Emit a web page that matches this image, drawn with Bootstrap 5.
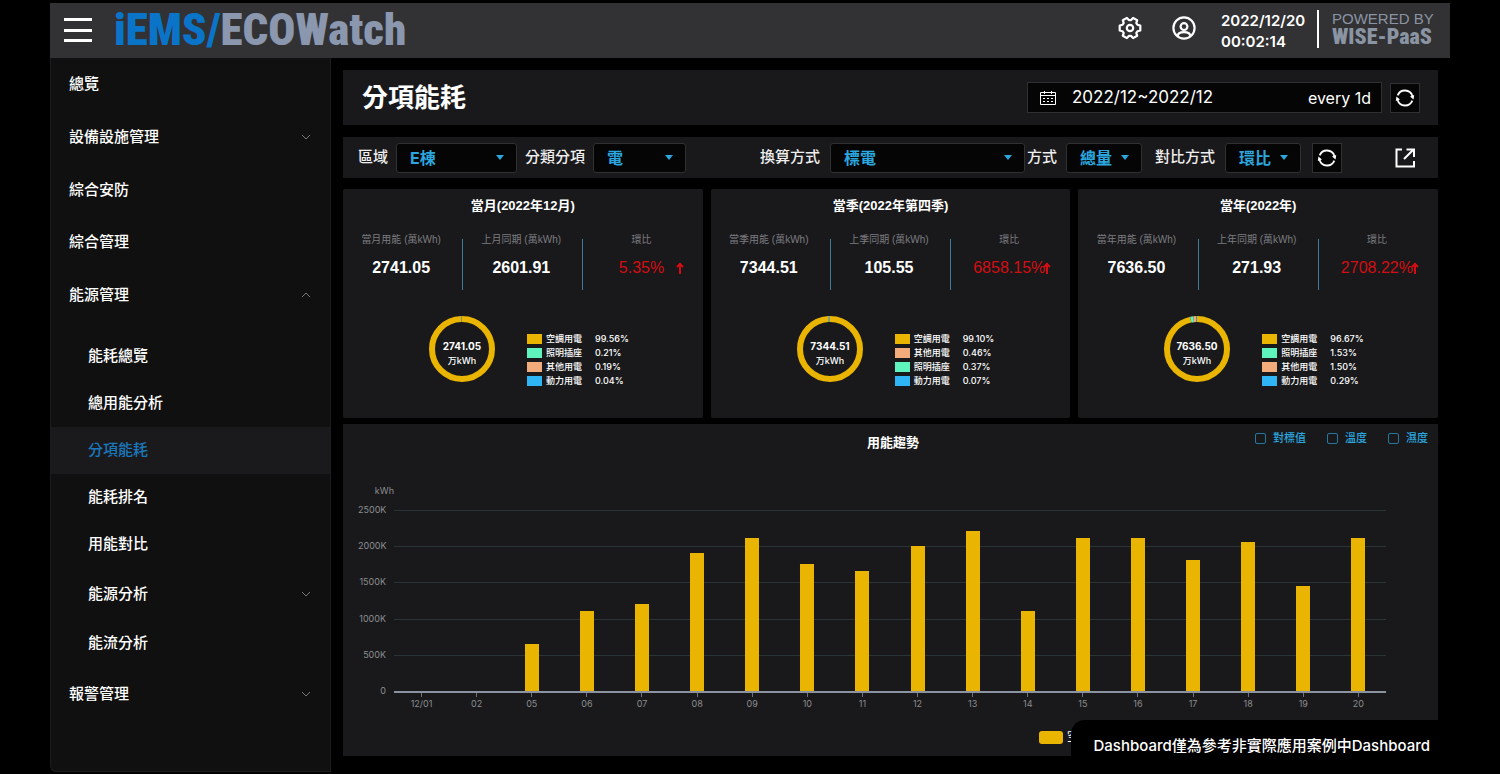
<!DOCTYPE html>
<html lang="zh-Hant">
<head>
<meta charset="utf-8">
<meta name="viewport" content="width=device-width, initial-scale=1">
<title>iEMS/ECOWatch</title>
<link href="https://cdn.jsdelivr.net/npm/bootstrap@5.3.0/dist/css/bootstrap.min.css" rel="stylesheet">
<style>
  :root { --panel:#19191b; --cyan:#2ba6df; --amber:#eab500; --mint:#5df5bd; --peach:#f2ab7b; --sky:#2fb4f5; }
  body { background:#000; color:#fff; font-family:Inter,"Noto Sans CJK TC",sans-serif; font-size:15px; }
  a { color:inherit; text-decoration:none; }
  .app { min-height:100vh; padding:3px 50px 2px; }
  .topbar { background:#323234; height:55px; }
  .burger { width:56px; height:55px; background:#1a1a1c; border:1px solid #232325; }
  .narrow { font-family:"Roboto Condensed",Roboto,"Liberation Sans",sans-serif; font-weight:900; }
  .brand { font-size:45px; line-height:52px; color:#8a97ae; padding-bottom:1px; }
  .brand span { color:#0a74c9; }
  .plain-btn { background:none; border:0; padding:0; color:#fff; line-height:0; }
  .top-icon { padding-bottom:6px; }
  .clock { line-height:21px; font-weight:600; width:96px; }
  .powered { border-left:2px solid #fff; height:38px; width:133px; color:#8a94a3; font-family:"Liberation Sans",sans-serif; line-height:17px; padding-left:13px; margin-bottom:4px; }
  .powered .narrow { font-size:22px; line-height:20px; }
  .sidebar { width:281px; background:#101010; border:1px solid #1c1c1e; border-top:0; border-bottom-left-radius:6px; }
  .side-item { height:52px; padding:0 19px 0 18px; width:100%; background:none; border:0; color:#fff; text-align:left; font-weight:500; }
  .side-item.tall { height:54px; }
  .side-sub { padding-top:11px; }
  .side-sub .side-item { height:47px; padding-left:37px; }
  .side-sub .side-item.tall { height:52px; }
  .side-sub .side-item.current { background:#1a1a1c; color:#1a78bd; }
  main { padding:12px 12px 0; min-width:0; }
  .panel { background:var(--panel); }
  .titlebar { height:55px; padding:0 18px 0 19px; }
  .titlebar h1 { font-size:26px; font-weight:700; }
  .boxed { background:#050505; border:1px solid #303032; color:#fff; }
  .range { width:355px; height:31px; padding:0 10px 0 12px; font-size:17px; }
  .range .step { font-size:16px; }
  .sq { width:30px; height:30px; padding:0; line-height:0; }
  .filters { height:41px; padding:0 23px 0 15px; margin-top:12px; }
  .filters label { font-weight:500; color:#eee; }
  .lab { margin-right:10px; }
  .lab-near { margin:0 9px 0 2px; }
  .lab-far { margin:0 10px 0 13px; }
  .filters .last { margin-left:11px; }
  .pick { height:30px; border-radius:3px; padding:0 12px 0 13px; color:var(--cyan); font-size:16px; font-weight:700; appearance:none;
    background:#050505 url("data:image/svg+xml,%3Csvg xmlns='http://www.w3.org/2000/svg' width='8' height='5'%3E%3Cpath d='M0 0h8L4 5z' fill='%232ba6df'/%3E%3C/svg%3E") no-repeat right 12px center; }
  .w-a { width:121px; } .w-b { width:93px; } .w-c { width:195px; } .w-d { width:76px; }
  .grow-l { flex:7; } .grow-r { flex:5; }
  .stats { margin:11px 0 6px; }
  .stat { height:229px; flex:1 1 0; border-radius:2px; }
  .cap { font-size:13px; line-height:18px; font-weight:700; font-family:"Liberation Sans","Noto Sans CJK TC",sans-serif; }
  .trio { padding-top:24px; font-family:"Liberation Sans","Noto Sans CJK TC",sans-serif; }
  .trio > div { flex:1 1 0; height:51px; padding-right:3px; }
  .trio > div + div { border-left:1px solid #3b7d99; }
  .trio .tag { font-size:10px; line-height:12px; margin-top:-5px; color:#7c7c80; white-space:nowrap; }
  .trio .num { font-size:16px; line-height:20px; margin-top:12px; font-weight:700; }
  .trio .rise { display:grid; color:#d40d12; font-weight:400; }
  .rise > * { grid-area:1/1; justify-self:center; }
  .rise > svg { justify-self:end; align-self:center; margin-right:16px; }
  .share { padding-top:24px; }
  .share .ring { width:68px; height:68px; margin:1px 0 0 85px; }
  .keys { margin:18px 0 0 31px; font-size:9px; line-height:14px; font-weight:500; }
  .keys i { width:15px; height:10px; }
  .keys .who { width:49px; }
  .trend { height:332px; padding:6px 10px 0 15px; }
  .trend .side { flex:1 1 0; }
  .opts { gap:21px; padding-top:1px; }
  .opts label { font-size:11px; line-height:14px; color:var(--cyan); font-weight:500; padding-left:7px; }
  .opts input { appearance:none; width:11px; height:11px; border:1px solid #24789f; border-radius:2px; margin:0; }
  .plot { margin:32px 42px 0 0; display:grid; grid-template-columns:28px 1fr; column-gap:8px; font-size:9px; color:#8b8d90; }
  .unit { line-height:14px; text-align:right; grid-column:1; margin-right:-8px; white-space:nowrap; }
  .yaxis { grid-column:1; grid-row:2; margin:6px 0 -6px; line-height:12px; height:193px; text-align:right; }
  .grid-lines, .bars { grid-column:2; grid-row:2; height:181px; margin-top:12px; }
  .grid-lines div { flex:1; border-top:1px solid #2a3336; }
  .bars { border-bottom:2px solid #8b93a0; height:183px; }
  .bars div { flex:1; }
  .bars i { display:block; width:14px; margin:0 auto; background:var(--amber); }
  .xaxis { grid-column:2; grid-row:3; }
  .xaxis div { flex:1; text-align:center; line-height:14px; }
  .xaxis div::before { content:""; display:block; width:1px; height:4px; background:#6c7280; margin:0 auto; }
  .series { width:389px; margin-top:18px; font-size:12px; line-height:16px; }
  .series i { width:24px; height:13px; border-radius:3px; background:var(--amber); }
  .note { position:fixed; right:0; bottom:0; height:54px; padding:0 70px 0 23px; background:#000; border-top-left-radius:14px; font-weight:500; line-height:52px; }
</style>
</head>
<body>
<svg width="0" height="0" class="d-none">
  <symbol id="down" viewBox="0 0 10 6"><path d="M1 1l4 4 4-4" fill="none" stroke="#77777b"/></symbol>
  <symbol id="up" viewBox="0 0 10 6"><path d="M1 5l4-4 4 4" fill="none" stroke="#77777b"/></symbol>
  <symbol id="sync" viewBox="-10 -10 20 20">
    <path d="M-7.3-2.6A7.8 7.8 0 0 1 7.4-2M7.3 2.6A7.8 7.8 0 0 1-7.4 2" fill="none" stroke="#fff" stroke-width="1.8"/>
    <path d="M5-1.6L9.2-3 8.6 1.6zM-5 1.6L-9.2 3-8.6-1.6z" fill="#fff"/>
  </symbol>
</svg>
<div class="app d-flex flex-column">
  <header class="topbar d-flex align-items-center">
    <button class="burger plain-btn flex-shrink-0" aria-label="選單">
      <svg width="28" height="26" fill="#fff"><path d="M0 0h28v3H0zM0 11h28v3H0zM0 21h28v3H0z"/></svg>
    </button>
    <a href="#" class="brand narrow ms-2"><span>iEMS/</span>ECOWatch</a>
    <div class="d-flex align-items-center ms-auto">
      <button class="plain-btn top-icon" aria-label="設定">
        <svg width="26" height="26" viewBox="-13 -13 26 26" fill="none" stroke="#fff" stroke-width="2.2" stroke-linejoin="round"><path d="M10.3-2.4V2.4L7.6 3.2 6.3 4.9 7.2 7.8 3.1 10.1 1.1 7.9H-1.1L-3.1 10.1-7.2 7.8-6.3 4.9-7.6 3.2-10.3 2.4V-2.4L-7.6-3.2-6.3-4.9-7.2-7.8-3.1-10.1-1.1-7.9H1.1L3.1-10.1 7.2-7.8 6.3-4.9 7.6-3.2z"/><circle r="3.2"/></svg>
      </button>
      <button class="plain-btn top-icon ms-4 ps-1" aria-label="使用者">
        <svg width="26" height="26" viewBox="-13 -13 26 26" fill="none" stroke="#fff" stroke-width="2.2"><circle r="10.6"/><circle cy="-1.4" r="3.4"/><path d="M-6.6 8.4C-6 2.6 6 2.6 6.6 8.4"/></svg>
      </button>
      <div class="clock text-nowrap ms-4">2022/12/20<br>00:02:14</div>
      <div class="powered text-nowrap"><div>POWERED BY</div><div class="narrow">WISE-PaaS</div></div>
    </div>
  </header>
  <div class="d-flex flex-fill">
    <nav class="sidebar flex-shrink-0">
      <a href="#" class="side-item d-flex align-items-center">總覽</a>
      <button class="side-item tall d-flex align-items-center justify-content-between">設備設施管理<svg width="10" height="6"><use href="#down"/></svg></button>
      <a href="#" class="side-item d-flex align-items-center">綜合安防</a>
      <a href="#" class="side-item d-flex align-items-center">綜合管理</a>
      <button class="side-item tall d-flex align-items-center justify-content-between">能源管理<svg width="10" height="6"><use href="#up"/></svg></button>
      <div class="side-sub">
        <a href="#" class="side-item d-flex align-items-center">能耗總覽</a>
        <a href="#" class="side-item d-flex align-items-center">總用能分析</a>
        <a href="#" class="side-item current d-flex align-items-center" aria-current="page">分項能耗</a>
        <a href="#" class="side-item d-flex align-items-center">能耗排名</a>
        <a href="#" class="side-item d-flex align-items-center">用能對比</a>
        <button class="side-item tall d-flex align-items-center justify-content-between">能源分析<svg width="10" height="6"><use href="#down"/></svg></button>
        <a href="#" class="side-item d-flex align-items-center">能流分析</a>
      </div>
      <button class="side-item tall d-flex align-items-center justify-content-between">報警管理<svg width="10" height="6"><use href="#down"/></svg></button>
    </nav>
    <main class="flex-fill">
      <div class="panel titlebar d-flex align-items-center">
        <h1 class="mb-0 me-auto">分項能耗</h1>
        <button class="boxed range d-flex align-items-center me-2">
          <svg width="16" height="16" fill="none" stroke="#fff"><path d="M.5 2.5h15v12H.5zM.5 5.5h15M4.5 1v3M11.5 1v3"/><path d="M3 8.5h10M3 11.5h10" stroke-dasharray="2 2"/></svg>
          <span class="ms-3">2022/12~2022/12</span><span class="step ms-auto">every 1d</span>
        </button>
        <button class="boxed sq" aria-label="重新整理"><svg width="20" height="20"><use href="#sync"/></svg></button>
      </div>
      <div class="panel filters d-flex align-items-center text-nowrap">
        <label for="area" class="me-2">區域</label><select id="area" class="boxed pick w-a"><option>E棟</option></select>
        <label for="kind" class="ms-2 me-2">分類分項</label><select id="kind" class="boxed pick w-b"><option>電</option></select>
        <div class="grow-l"></div>
        <label for="conv" class="lab">換算方式</label><select id="conv" class="boxed pick w-c"><option>標電</option></select>
        <label for="mode" class="lab-near">方式</label><select id="mode" class="boxed pick w-d"><option>總量</option></select>
        <label for="comp" class="lab-far">對比方式</label><select id="comp" class="boxed pick w-d"><option>環比</option></select>
        <button class="boxed sq last" aria-label="重新整理"><svg width="20" height="20"><use href="#sync"/></svg></button>
        <div class="grow-r"></div>
        <button class="plain-btn" aria-label="匯出"><svg width="20" height="20" fill="none" stroke="#fff" stroke-width="2"><path d="M7 1.5H1.5v17H19V13M9 11l9-9M11.5 1.5H19V9"/></svg></button>
      </div>
      <div class="stats d-flex gap-2" id="stats"></div>
      <section class="panel trend">
        <div class="d-flex">
          <div class="side"></div>
          <h2 class="cap mb-0 pt-1">用能趨勢</h2>
          <div class="side opts d-flex justify-content-end align-items-start">
            <div class="d-flex align-items-center"><input type="checkbox" id="o1"><label for="o1">對標值</label></div>
            <div class="d-flex align-items-center"><input type="checkbox" id="o2"><label for="o2">溫度</label></div>
            <div class="d-flex align-items-center"><input type="checkbox" id="o3"><label for="o3">濕度</label></div>
          </div>
        </div>
        <div class="plot">
          <div class="unit">kWh</div>
          <div class="yaxis d-flex flex-column justify-content-between"><div>2500K</div><div>2000K</div><div>1500K</div><div>1000K</div><div>500K</div><div>0</div></div>
          <div class="grid-lines d-flex flex-column"><div></div><div></div><div></div><div></div><div></div></div>
          <div class="bars d-flex align-items-end" id="bars"></div>
          <div class="xaxis d-flex" id="days"></div>
        </div>
        <div class="series d-flex align-items-center ms-auto"><i class="me-1"></i>空</div>
      </section>
    </main>
  </div>
</div>
<div class="note text-nowrap">Dashboard僅為參考非實際應用案例中Dashboard</div>
<script>
const tone = {空調用電:'--amber', 照明插座:'--mint', 其他用電:'--peach', 動力用電:'--sky'};
const stats = [
  {t:'當月(2022年12月)', a:'當月用能', b:'上月同期', now:'2741.05', was:'2601.91', pct:'5.35%', s:[['空調用電',99.56],['照明插座',.21],['其他用電',.19],['動力用電',.04]]},
  {t:'當季(2022年第四季)', a:'當季用能', b:'上季同期', now:'7344.51', was:'105.55', pct:'6858.15%', s:[['空調用電',99.10],['其他用電',.46],['照明插座',.37],['動力用電',.07]]},
  {t:'當年(2022年)', a:'當年用能', b:'上年同期', now:'7636.50', was:'271.93', pct:'2708.22%', s:[['空調用電',96.67],['照明插座',1.53],['其他用電',1.50],['動力用電',.29]]}
];
document.getElementById('stats').innerHTML = stats.map(c => {
  let start = 0;
  const arcs = c.s.map(([n, v]) => {
    const arc = `<circle r="30" fill="none" stroke="var(${tone[n]})" stroke-width="6" pathLength="100" stroke-dasharray="${v} 100" stroke-dashoffset="${-start}" transform="rotate(-90)"/>`;
    start += v;
    return arc;
  }).join('');
  const keys = c.s.map(([n, v]) => `<li class="d-flex align-items-center"><i class="me-1" style="background:var(${tone[n]})"></i><span class="who">${n}</span><span>${v.toFixed(2)}%</span></li>`).join('');
  return `<section class="panel stat">
    <h2 class="cap text-center mb-0 pt-2">${c.t}</h2>
    <div class="trio d-flex text-center">
      <div><div class="tag">${c.a} (萬kWh)</div><div class="num">${c.now}</div></div>
      <div><div class="tag">${c.b} (萬kWh)</div><div class="num">${c.was}</div></div>
      <div><div class="tag">環比</div><div class="num rise"><span>${c.pct}</span><svg width="8" height="12" fill="none" stroke="#d40d12" stroke-width="2"><path d="M4 12V1M1 5l3-3 3 3"/></svg></div></div>
    </div>
    <div class="share d-flex">
      <svg class="ring" viewBox="-34 -34 68 68">${arcs}<text text-anchor="middle" y="1" fill="#fff" font-size="10" font-weight="700">${c.now}</text><text text-anchor="middle" y="15" fill="#fff" font-size="9" font-weight="500">万kWh</text></svg>
      <ul class="keys list-unstyled">${keys}</ul>
    </div></section>`;
}).join('');
const days = [['12/01',0],['02',0],['05',650],['06',1103],['07',1200],['08',1905],['09',2110],['10',1752],['11',1655],['12',2007],['13',2207],['14',1103],['15',2110],['16',2110],['17',1807],['18',2055],['19',1450],['20',2110]];
document.getElementById('bars').innerHTML = days.map(d => `<div class="h-100 d-flex align-items-end"><i style="height:${d[1] / 25}%"></i></div>`).join('');
document.getElementById('days').innerHTML = days.map(d => `<div>${d[0]}</div>`).join('');
</script>
<script src="https://cdn.jsdelivr.net/npm/bootstrap@5.3.0/dist/js/bootstrap.bundle.min.js"></script>
</body>
</html>
